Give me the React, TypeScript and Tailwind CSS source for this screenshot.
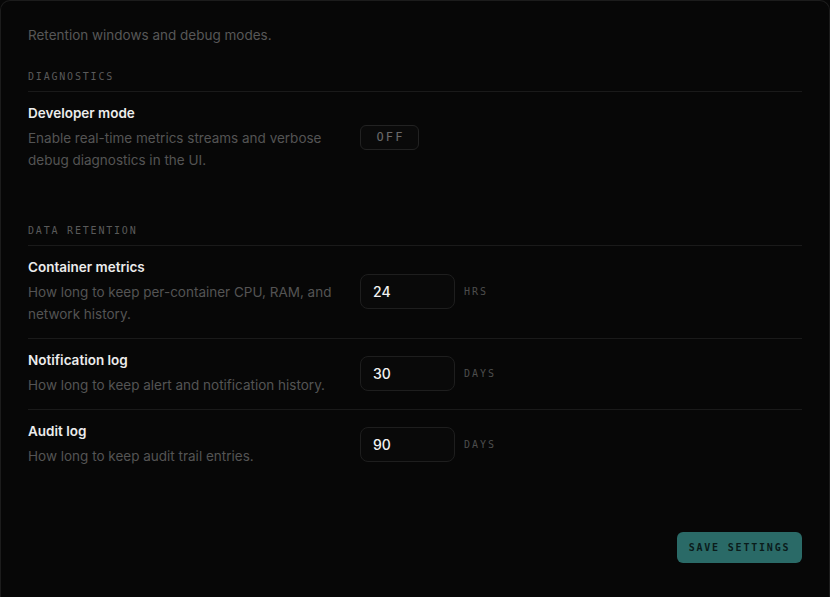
import React from "react";

const sans = { fontFamily: 'Inter, "Noto Sans", sans-serif' };
const mono = { fontFamily: '"DejaVu Sans Mono", "Liberation Mono", monospace' };

function SectionLabel({ children }: { children: React.ReactNode }) {
  return (
    <div
      className="border-b border-[#1a1a1a] pt-px pb-[7px] text-[10px] leading-[14px] tracking-[0.18em] text-[#5a5a5a]"
      style={mono}
    >
      {children}
    </div>
  );
}

function Row({
  title,
  desc,
  control,
  last,
}: {
  title: string;
  desc: string;
  control: React.ReactNode;
  last?: boolean;
}) {
  return (
    <div
      className={`flex items-center gap-5 pt-[11px] pb-[13px] ${last ? "" : "border-b border-[#1a1a1a]"}`}
    >
      <div className="w-[312px] shrink-0">
        <div className="text-[13.5px] leading-5 font-semibold text-[#ececec]">{title}</div>
        <div className="mt-1 text-[13.5px] leading-[22px] text-[#545454]">{desc}</div>
      </div>
      {control}
    </div>
  );
}

function NumberField({ value, unit }: { value: string; unit: string }) {
  return (
    <div className="flex items-center gap-2">
      <div className="flex h-[35px] w-[95px] items-center rounded-lg border border-[#1e1e1e] bg-[#090909] pl-3 text-[14px] font-medium text-[#f2f2f2]">
        {value}
      </div>
      <span className="pl-px text-[10px] tracking-[0.2em] text-[#4d4d4d]" style={mono}>
        {unit}
      </span>
    </div>
  );
}

export default function App() {
  return (
    <div className="min-h-screen bg-[#070707]" style={sans}>
      <div className="min-h-[597px] rounded-t-[10px] border border-b-0 border-[#1c1c1c] bg-[#070707] px-[27px] pt-6">
        <p className="text-[13.5px] leading-5 text-[#575757]">Retention windows and debug modes.</p>

        <div className="mt-6">
          <SectionLabel>DIAGNOSTICS</SectionLabel>
          <Row
            title="Developer mode"
            desc="Enable real-time metrics streams and verbose debug diagnostics in the UI."
            last
            control={
              <button
                className="h-[25px] w-[59px] rounded-md border border-[#222] bg-[#0a0a0a] pl-[2px] text-[12px] tracking-[0.18em] text-[#6a6a6a]"
                style={mono}
              >
                OFF
              </button>
            }
          />
        </div>

        <div className="mt-[39px]">
          <SectionLabel>DATA RETENTION</SectionLabel>
          <Row
            title="Container metrics"
            desc="How long to keep per-container CPU, RAM, and network history."
            control={<NumberField value="24" unit="HRS" />}
          />
          <Row
            title="Notification log"
            desc="How long to keep alert and notification history."
            control={<NumberField value="30" unit="DAYS" />}
          />
          <Row
            title="Audit log"
            desc="How long to keep audit trail entries."
            last
            control={<NumberField value="90" unit="DAYS" />}
          />
        </div>

        <div className="mt-[52px] flex justify-end">
          <button
            className="h-[31px] w-[125px] rounded-md bg-[#2a6a67] text-[10px] font-bold tracking-[0.18em] text-[#0a1c1b]"
            style={mono}
          >
            SAVE SETTINGS
          </button>
        </div>
      </div>
    </div>
  );
}
